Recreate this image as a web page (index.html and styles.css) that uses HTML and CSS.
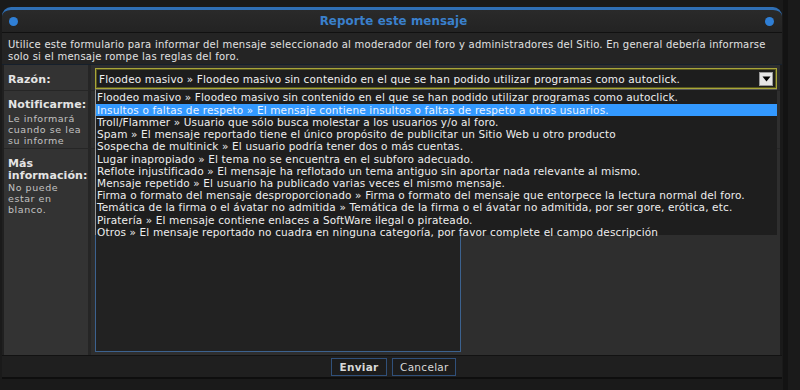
FILE: index.html
```html
<!DOCTYPE html>
<html lang="es">
<head>
<meta charset="utf-8">
<title>Reporte este mensaje</title>
<link rel="stylesheet" href="styles.css">
</head>
<body>
<div class="screen">
  <div class="panel">
    <div class="head">
      <span class="dot"></span>
      <h1 class="title">Reporte este mensaje</h1>
      <span class="dot"></span>
    </div>
    <div class="desc">Utilice este formulario para informar del mensaje seleccionado al moderador del foro y administradores del Sitio. En general debería informarse solo si el mensaje rompe las reglas del foro.</div>
    <div class="form">
      <div class="row row-reason">
        <div class="dt"><span class="lbl">Razón:</span></div>
        <div class="dd">
          <div class="select">
            <span class="sel-text">Floodeo masivo » Floodeo masivo sin contenido en el que se han podido utilizar programas como autoclick.</span>
            <span class="sel-btn"><svg width="9" height="6" viewBox="0 0 9 6"><path d="M0.5 0.5h8L4.5 5.5z" fill="#000"/></svg></span>
          </div>
          <ul class="list">
            <li>Floodeo masivo » Floodeo masivo sin contenido en el que se han podido utilizar programas como autoclick.</li>
            <li class="hl">Insultos o faltas de respeto » El mensaje contiene insultos o faltas de respeto a otros usuarios.</li>
            <li>Troll/Flammer » Usuario que sólo busca molestar a los usuarios y/o al foro.</li>
            <li>Spam » El mensaje reportado tiene el único propósito de publicitar un Sitio Web u otro producto</li>
            <li>Sospecha de multinick » El usuario podría tener dos o más cuentas.</li>
            <li>Lugar inapropiado » El tema no se encuentra en el subforo adecuado.</li>
            <li>Reflote injustificado » El mensaje ha reflotado un tema antiguo sin aportar nada relevante al mismo.</li>
            <li>Mensaje repetido » El usuario ha publicado varias veces el mismo mensaje.</li>
            <li>Firma o formato del mensaje desproporcionado » Firma o formato del mensaje que entorpece la lectura normal del foro.</li>
            <li>Temática de la firma o el ávatar no admitida » Temática de la firma o el ávatar no admitida, por ser gore, erótica, etc.</li>
            <li>Piratería » El mensaje contiene enlaces a SoftWare ilegal o pirateado.</li>
            <li>Otros » El mensaje reportado no cuadra en ninguna categoría, por favor complete el campo descripción</li>
          </ul>
        </div>
      </div>
      <div class="row row-notify">
        <div class="dt"><span class="lbl">Notificarme:</span><span class="sub">Le informará cuando se lea su informe</span></div>
        <div class="dd"></div>
      </div>
      <div class="row row-info">
        <div class="dt"><span class="lbl">Más información:</span><span class="sub">No puede estar en blanco.</span></div>
        <div class="dd"><div class="textarea"></div></div>
      </div>
    </div>
    <div class="foot">
      <button class="btn btn-main">Enviar</button>
      <button class="btn">Cancelar</button>
    </div>
  </div>
  <div class="rail"></div>
</div>
</body>
</html>
```

FILE: styles.css
```css
* { box-sizing: border-box; }
html, body { margin: 0; padding: 0; }
body {
  background: #1a1a1a;
  font-family: "DejaVu Sans", Verdana, sans-serif;
  color: #e2e2e2;
  width: 800px;
  height: 390px;
  overflow: hidden;
}
.screen {
  display: flex;
  padding: 7px 0 0 2px;
  height: 390px;
}
.panel {
  width: 780px;
  display: flex;
  flex-direction: column;
  height: 372px;
}
.rail {
  width: 5px;
  margin-left: 1px;
  background: #131313;
  height: 390px;
  margin-top: -7px;
}
.head {
  height: 27px;
  background: linear-gradient(#2a2a2a, #232323);
  border-top: 3px solid #2f6fb5;
  border-radius: 9px 9px 0 0;
  display: flex;
  align-items: center;
  justify-content: space-between;
  padding: 0 8px 0 7px;
  border-bottom: 1px solid #111;
}
.dot {
  width: 9px;
  height: 9px;
  border-radius: 50%;
  background: #2f7fd6;
}
.title {
  margin: 0;
  font-size: 11.8px;
  font-weight: bold;
  color: #3a80cc;
  letter-spacing: 0.1px;
  padding-left: 4px;
}
.desc {
  background: #242424;
  font-size: 10px;
  line-height: 12px;
  padding: 6px 6px 6px 6px;
  height: 32px;
  letter-spacing: 0.25px;
  border-bottom: 1px solid #16202c;
}
.form {
  flex: 1;
  display: flex;
  flex-direction: column;
  border-left: 2px solid #202020;
  border-right: 2px solid #1a1a1a;
}
.row {
  display: grid;
  grid-template-columns: 87px 1fr;
  border-bottom: 1px solid #262626;
}
.row-reason { height: 26px; }
.row-notify { height: 58px; }
.row-info { flex: 1; border-bottom: none; }
.dt {
  background: #333333;
  border-right: 3px solid #252525;
  padding: 4px 4px 0 4px;
  display: flex;
  flex-direction: column;
}
.dd {
  background: #2e2e2e;
  padding: 3px 3px 0 4px;
  position: relative;
}
.lbl {
  font-weight: bold;
  font-size: 11px;
  line-height: 12px;
  color: #e4e4e4;
  letter-spacing: 0.1px;
}
.row-reason .dt { padding-top: 9px; }
.row-notify .dt { padding-top: 8px; }
.row-info .dt { padding-top: 9px; }
.sub {
  font-size: 9.5px;
  line-height: 11px;
  color: #c2c2c2;
  margin-top: 2px;
  letter-spacing: 0.55px;
}
.row-info .sub { margin-top: 0; }
.select {
  height: 21px;
  border: 1px solid #a8a63a;
  box-shadow: inset 0 0 0 1px #55541e;
  background: #1d1d1d;
  display: flex;
  align-items: center;
  padding: 0 2px 0 3px;
  font-size: 10.5px;
  letter-spacing: 0.14px;
  color: #f0f0f0;
  overflow: hidden;
  white-space: nowrap;
}
.sel-text { flex: 1; overflow: hidden; }
.sel-btn {
  width: 14px;
  height: 14px;
  background: #e6e6e6;
  border: 1px solid #9a9a9a;
  display: flex;
  align-items: center;
  justify-content: center;
  margin-right: 1px;
}
.list {
  position: absolute;
  left: 4px;
  top: 24px;
  width: 682px;
  height: 146px;
  margin: 0;
  padding: 1px 0 0 0;
  list-style: none;
  background: #1e1e1e;
  border-left: 1px solid #9a9a9a;
  border-top: 1px solid #555;
  z-index: 5;
}
.list li {
  font-size: 10.5px;
  line-height: 12.2px;
  padding-left: 1px;
  letter-spacing: 0.14px;
  white-space: nowrap;
  color: #eeeeee;
}
.list li.hl {
  background: #3399ff;
  color: #eaf3ff;
}
.textarea {
  width: 366px;
  height: 200px;
  border: 1px solid #3c628f;
  background: #222222;
  margin-top: 0;
}
.row-info .dd { display: flex; align-items: flex-end; padding-bottom: 3px; }
.foot {
  height: 24px;
  background: #1f1f1f;
  border-top: 1px solid #121212;
  border-bottom: 2px solid #0e0e0e;
  display: flex;
  justify-content: center;
  align-items: center;
  gap: 5px;
  padding-left: 3px;
}
.btn {
  height: 18px;
  background: #1c1c1c;
  border: 1px solid #30507a;
  color: #d8d8d8;
  font-family: "DejaVu Sans", Verdana, sans-serif;
  font-size: 10.5px;
  padding: 0 7px;
  letter-spacing: 0.3px;
}
.btn-main { font-weight: bold; width: 56px; }
.btn:not(.btn-main) { width: 64px; }
```
